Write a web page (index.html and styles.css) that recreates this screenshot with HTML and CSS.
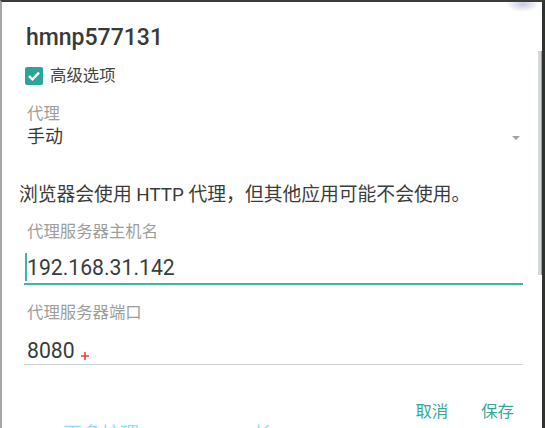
FILE: index.html
```html
<!DOCTYPE html>
<html lang="zh-CN">
<head>
  <meta charset="UTF-8" />
  <meta name="viewport" content="width=device-width, initial-scale=1.0"/>
  <title>hmnp577131</title>
  <link rel="stylesheet" href="styles.css">
</head>
<body>
  <div class="screen">
    <div class="glow"></div>
    <div class="scroll-thumb"></div>

    <div class="dialog">
      <h1 class="title">hmnp577131</h1>

      <label class="check-row">
        <span class="checkbox">
          <svg width="14" height="14" viewBox="0 0 14 14"><path d="M2 7.2 L5.4 10.4 L12 3.6" fill="none" stroke="#fff" stroke-width="2.4"/></svg>
        </span>
        <span class="check-text">高级选项</span>
      </label>

      <div class="field-label first">代理</div>
      <div class="select">
        <span>手动</span>
        <span class="arrow"></span>
      </div>

      <p class="note">浏览器会使用 HTTP 代理，但其他应用可能不会使用。</p>

      <div class="field-label host">代理服务器主机名</div>
      <div class="input-line focused">
        <span class="cursor"></span>
        <span class="value">192.168.31.142</span>
      </div>

      <div class="field-label port">代理服务器端口</div>
      <div class="input-line">
        <span class="value">8080</span>
        <svg class="plus" width="8" height="8" viewBox="0 0 8 8"><path d="M4 0 V8 M0 4 H8" stroke="#e5463b" stroke-width="1.6"/></svg>
      </div>

      <div class="actions">
        <button class="text-btn">取消</button>
        <button class="text-btn">保存</button>
      </div>

      <div class="behind">更多护理　　　　　　长</div>
    </div>
  </div>
</body>
</html>
```

FILE: styles.css
```css
* {
  box-sizing: border-box;
}

body {
  margin: 0;
  width: 545px;
  height: 428px;
  overflow: hidden;
  background-color: #ffffff;
  font-family: Roboto, "Noto Sans CJK SC", sans-serif;
}

.screen {
  position: relative;
  height: 428px;
  border-top: 2px solid #3a3d3a;
  border-left: 2px solid #a3a6a3;
  border-right: 3px solid #2f332f;
  overflow: hidden;
}

.glow {
  position: absolute;
  top: -6px;
  right: 2px;
  width: 34px;
  height: 16px;
  background: radial-gradient(ellipse at center, rgba(150, 160, 200, 0.55), rgba(255, 255, 255, 0) 70%);
}

.scroll-thumb {
  position: absolute;
  top: 49px;
  right: 0;
  width: 4px;
  height: 224px;
  background-color: #d7dad6;
  border-right: 1px solid #9a9d9a;
}

.dialog {
  padding: 22px 19px 0 22px;
}

.title {
  margin: 0;
  height: 28px;
  line-height: 28px;
  font-size: 23px;
  font-weight: 500;
  color: #383a38;
  padding-left: 2px;
}

.check-row {
  display: flex;
  align-items: center;
  gap: 7px;
  margin-top: 15px;
  height: 18px;
  padding-left: 1px;
}

.checkbox {
  width: 18px;
  height: 18px;
  border-radius: 2px;
  background-color: #2aa597;
  display: flex;
  align-items: center;
  justify-content: center;
}

.check-text {
  font-size: 16.4px;
  line-height: 18px;
  color: #444644;
}

.field-label {
  height: 20px;
  line-height: 20px;
  font-size: 16.4px;
  color: #9c9e9c;
  padding-left: 3px;
}

.field-label.first {
  margin-top: 19px;
}

.field-label.host {
  margin-top: 17px;
}

.field-label.port {
  margin-top: 18px;
}

.select {
  display: flex;
  justify-content: space-between;
  align-items: center;
  margin-top: 3px;
  height: 20px;
  line-height: 20px;
  font-size: 18px;
  color: #3a3c3a;
  padding-left: 3px;
  padding-right: 3px;
}

.arrow {
  width: 0;
  height: 0;
  border-left: 4px solid transparent;
  border-right: 4px solid transparent;
  border-top: 4px solid #a0a2a0;
  margin-top: 1px;
}

.note {
  margin: 38px 0 0 -5px;
  height: 20px;
  line-height: 20px;
  font-size: 18.8px;
  color: #3a3c3a;
}

.input-line {
  display: flex;
  align-items: center;
  margin-top: 13px;
  height: 29px;
  border-bottom: 1px solid #cdd0cd;
  font-size: 21.2px;
  color: #3a3c3a;
  padding-left: 3px;
}

.input-line.focused {
  margin-top: 11px;
  height: 32px;
  border-bottom: 2px solid #3fb5a6;
  padding-left: 1px;
  padding-bottom: 2px;
}

.cursor {
  width: 2px;
  height: 28px;
  background-color: #3fb5a6;
}

.plus {
  margin-left: 6px;
  margin-top: 12px;
}

.actions {
  display: flex;
  justify-content: flex-end;
  gap: 33px;
  margin-top: 37px;
  padding-right: 9px;
  height: 20px;
}

.text-btn {
  border: none;
  background: none;
  padding: 0;
  font-family: Roboto, "Noto Sans CJK SC", sans-serif;
  font-size: 16.4px;
  line-height: 20px;
  color: #34a999;
}

.behind {
  margin: 2px 0 0 39px;
  font-size: 19px;
  line-height: 22px;
  color: #86e2ee;
  white-space: nowrap;
}
```
